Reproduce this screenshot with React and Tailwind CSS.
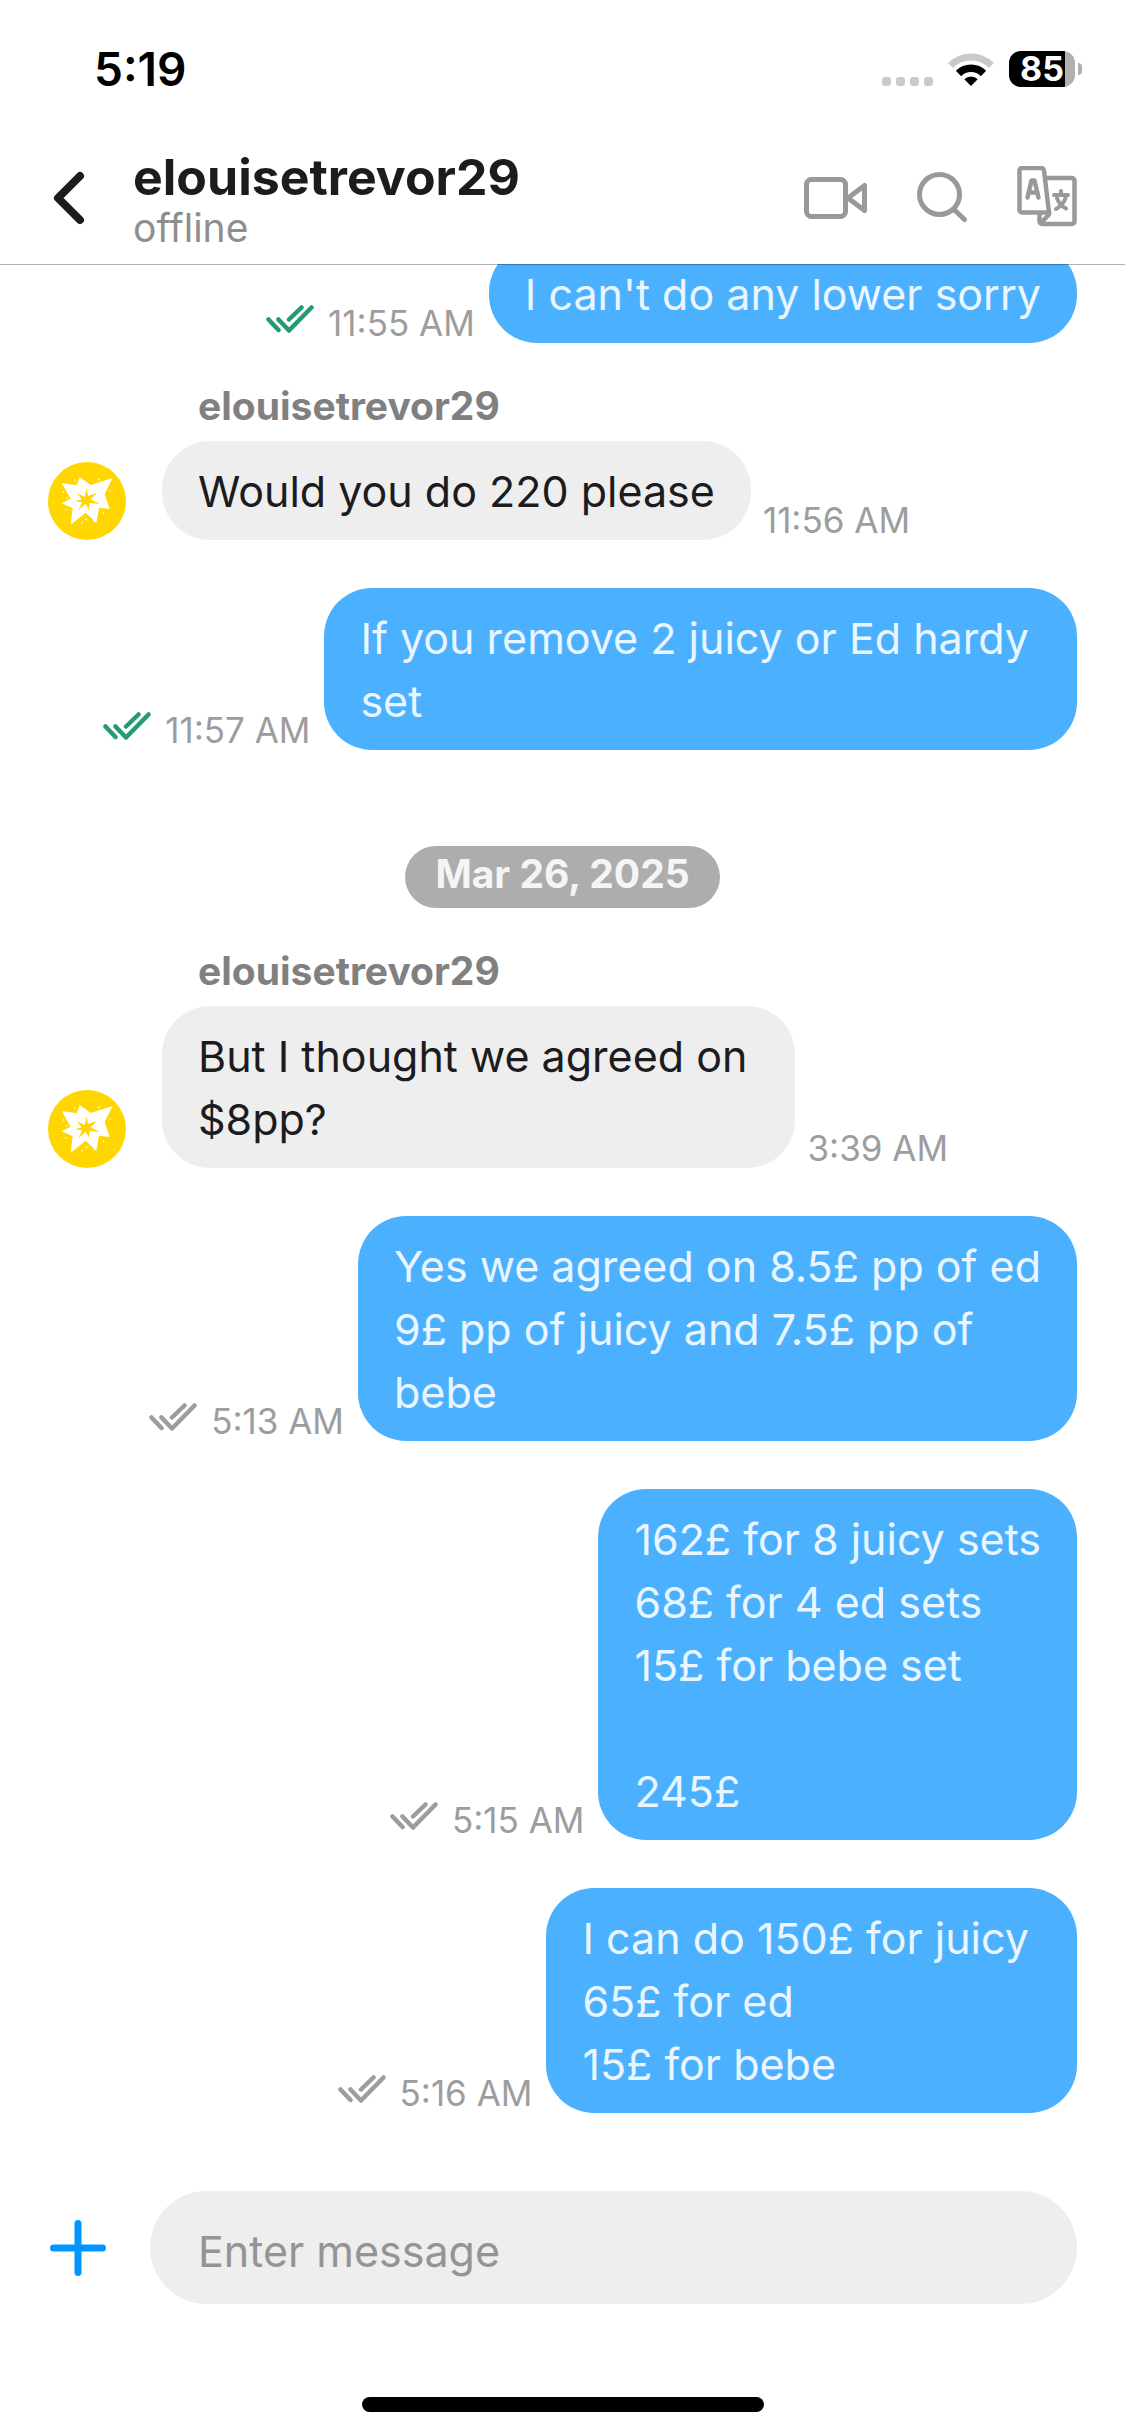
import React, { useState } from 'react';

const PEER = 'elouisetrevor29';

const MESSAGES = [
  { id: 1, mine: true, text: "I can't do any lower sorry", time: '11:55 AM', read: true },
  { id: 2, mine: false, text: 'Would you do 220 please', time: '11:56 AM' },
  { id: 3, mine: true, text: 'If you remove 2 juicy or Ed hardy \nset', time: '11:57 AM', read: true },
  { id: 4, date: 'Mar 26, 2025' },
  { id: 5, mine: false, text: 'But I thought we agreed on \n$8pp?', time: '3:39 AM' },
  { id: 6, mine: true, text: 'Yes we agreed on 8.5£ pp of ed\n9£ pp of juicy and 7.5£ pp of\nbebe', time: '5:13 AM' },
  { id: 7, mine: true, text: '162£ for 8 juicy sets\n68£ for 4 ed sets\n15£ for bebe set\n\n245£', time: '5:15 AM' },
  { id: 8, mine: true, text: 'I can do 150£ for juicy \n65£ for ed\n15£ for bebe', time: '5:16 AM' },
];

function StatusBar() {
  return (
    <div className="flex h-[132px] items-center justify-between pt-1.5 pr-[43px] pl-[94px] text-black">
      <span className="text-[46px] leading-[52px] font-semibold">5:19</span>
      <div className="flex items-center">
        <svg width="51" height="34" viewBox="0 0 51 34" fill="#cacaca" aria-hidden="true">
          <rect x="0" y="25" width="9" height="9" rx="3" />
          <rect x="14" y="25" width="9" height="9" rx="3" />
          <rect x="28" y="25" width="9" height="9" rx="3" />
          <rect x="42" y="25" width="9" height="9" rx="3" />
        </svg>
        <svg className="ml-[15px]" width="46" height="34" viewBox="0 0 46 34" fill="none" aria-hidden="true">
          <path d="M2.5 13.5a29 29 0 0 1 41 0" stroke="#cacaca" strokeWidth="7" />
          <path d="M10.5 21.5a17.7 17.7 0 0 1 25 0" stroke="#000" strokeWidth="7.5" />
          <path d="M16.3 27.3a9.5 9.5 0 0 1 13.4 0L23 34z" fill="#000" />
        </svg>
        <div className="ml-[15px] flex h-9 w-[66px] items-center justify-center rounded-xl bg-linear-to-r from-black from-85% to-[#b0b0b0] to-85% text-[34px] leading-9 font-bold text-white">
          85
        </div>
        <div className="ml-[3px] h-3 w-1 rounded-r-full bg-[#b0b0b0]" />
      </div>
    </div>
  );
}

function BackIcon() {
  return (
    <svg width="32" height="54" viewBox="0 0 32 54" fill="none" stroke="#1c1c1e" strokeWidth="8" strokeLinecap="round" strokeLinejoin="round">
      <path d="M27 5 5 27l22 22" />
    </svg>
  );
}

function VideoIcon() {
  return (
    <svg width="63" height="42" viewBox="0 0 63 42" fill="none" stroke="#999" strokeWidth="5" strokeLinejoin="round">
      <rect x="2.5" y="2.5" width="39" height="37" rx="5" />
      <path d="M60.5 8.5v25L44 21z" />
    </svg>
  );
}

function SearchIcon() {
  return (
    <svg width="54" height="52" viewBox="0 0 54 52" fill="none" stroke="#999" strokeWidth="5" strokeLinecap="round">
      <circle cx="24.5" cy="22.5" r="20" />
      <path d="m39.5 38 10 9.5" />
    </svg>
  );
}

function TranslateIcon() {
  return (
    <svg width="60" height="64" viewBox="0 0 60 64" fill="none" stroke="#999" strokeWidth="4.5" strokeLinecap="round" strokeLinejoin="round">
      <path d="M2.5 4.5A2.5 2.5 0 0 1 5 2h19a3 3 0 0 1 3 2.5l5 42H5A2.5 2.5 0 0 1 2.5 44z" />
      <path d="M29 12h26a2.5 2.5 0 0 1 2.5 2.5v41A2.5 2.5 0 0 1 55 58H25a2.5 2.5 0 0 1-2.5-2.5v-8" />
      <path d="m24 57 8-8.5v-2" />
      <path d="m10.5 31.5 4-17h3l4 17M12 26.5h8" />
      <path d="M37 29h14M44 25v4M40 32c1.5 5 5 8.5 9 10.5M48.5 32C47 37 43.5 40.5 39 43" strokeWidth="4" />
    </svg>
  );
}

function Checks({ read }) {
  return (
    <svg
      className={`mr-3.5 mb-2 ${read ? 'text-[#259b71]' : 'text-[#9d9d9d]'}`}
      width="48"
      height="28"
      viewBox="0 0 48 28"
      fill="none"
      stroke="currentColor"
      strokeWidth="4.5"
      strokeLinecap="round"
      strokeLinejoin="round"
      role="img"
      aria-label={read ? 'Read' : 'Delivered'}
    >
      <path d="m2.5 14.5 10 10.5M12.5 14.5 23 25.5l22.5-23M23 14.5l12.5-12" />
    </svg>
  );
}

function Avatar() {
  return (
    <svg className="mr-9 size-[78px] shrink-0" viewBox="54 276 234 234" aria-hidden="true">
      <circle cx="171" cy="393" r="117" fill="#ffd600" />
      <path
        fill="#fff"
        d="m95 339 45 7 9-25 33 24 66-21-24 48 15 45-32-4-8 45-32-30-45 36 6-49-33-15 27-14z"
      />
      <path
        fill="#ffd600"
        d="m170 355 4 23 27-9-19 19 27 14-30-3-2 20-10-18-21 18 10-22-21-3 20-6-15-19 24 12z"
      />
      <path
        fill="#fff"
        d="m131 327 6 2-1 7zm79-4-2 9-5-3zm34 37-5 7-1-5zm-146 2 6 5-5 2zm10 19 7 1-5 5zm-3 37 6 1-4 5zm48 40 6-5-2 8zm16-15 3 9-6-3zm20 9 7-2-2 8zm30-26 6 5-6 2z"
      />
    </svg>
  );
}

function Message({ msg }) {
  if (msg.date) {
    return (
      <li className="mt-12 flex justify-center">
        <span className="h-[62px] rounded-full bg-[#adadad] px-[30px] text-[39px] leading-[56px] font-bold text-[#f5f5f5]">
          {msg.date}
        </span>
      </li>
    );
  }

  if (msg.mine) {
    return (
      <li className="flex items-end justify-end">
        <div className="flex items-end pb-0.5">
          <Checks read={msg.read} />
          <time className="mr-3.5 text-[35px] leading-9 text-[#9d9d9d]">{msg.time}</time>
        </div>
        <p className="rounded-[48px] bg-[#4bb1ff] px-9 pt-[19px] pb-[17px] text-[43px] leading-[63px] whitespace-pre text-[#e9f5ff]">
          {msg.text}
        </p>
      </li>
    );
  }

  return (
    <li>
      <div className="h-[50px] pl-[150px] text-[39px] leading-[30px] font-bold text-[#808080]">{PEER}</div>
      <div className="flex items-end">
        <Avatar />
        <p className="rounded-[48px] bg-[#eee] px-9 pt-[19px] pb-[17px] text-[43px] leading-[63px] whitespace-pre text-[#1c1c1e]">
          {msg.text}
        </p>
        <time className="ml-3 pb-0.5 text-[35px] leading-9 text-[#9d9d9d]">{msg.time}</time>
      </div>
    </li>
  );
}

export default function App() {
  const [draft, setDraft] = useState('');

  return (
    <div className="flex h-screen flex-col bg-white font-['Inter',sans-serif]">
      <header className="relative z-10 border-b border-black/30 bg-white bg-clip-padding">
        <StatusBar />
        <div className="flex h-[132px] items-center pr-12 pl-[53px]">
          <button type="button" aria-label="Back">
            <BackIcon />
          </button>
          <div className="ml-12 flex-1 pt-1">
            <h1 className="text-[50px] leading-[56px] font-bold text-[#1c1c1e]">{PEER}</h1>
            <p className="text-[39px] leading-[46px] text-[#8e8e8e]">offline</p>
          </div>
          <div className="flex items-center gap-12">
            <button type="button" aria-label="Video call">
              <VideoIcon />
            </button>
            <button type="button" aria-label="Search">
              <SearchIcon />
            </button>
            <button type="button" aria-label="Translate">
              <TranslateIcon />
            </button>
          </div>
        </div>
      </header>

      <main className="-mt-px flex min-h-0 flex-1 flex-col justify-end overflow-hidden px-12 pb-[78px]">
        <ul className="flex flex-col gap-12">
          {MESSAGES.map((m) => (
            <Message key={m.id} msg={m} />
          ))}
        </ul>
      </main>

      <footer>
        <form className="flex items-center pr-12 pl-[49px]" onSubmit={(e) => e.preventDefault()}>
          <button type="button" aria-label="Add attachment" className="mr-[43px]">
            <svg width="58" height="58" viewBox="0 0 58 58" stroke="#0095ff" strokeWidth="7" strokeLinecap="round">
              <path d="M29 4.5v49M4.5 29h49" />
            </svg>
          </button>
          <input
            type="text"
            aria-label="Message"
            placeholder="Enter message"
            value={draft}
            onChange={(e) => setDraft(e.target.value)}
            className="h-[113px] min-w-0 flex-1 rounded-full bg-[#eee] px-12 pt-1.5 text-[43px] text-[#1c1c1e] outline-none placeholder:text-[#949494]"
          />
        </form>
        <div className="flex h-[132px] items-end justify-center pb-6">
          <div className="h-[15px] w-[402px] rounded-full bg-black" />
        </div>
      </footer>
    </div>
  );
}
